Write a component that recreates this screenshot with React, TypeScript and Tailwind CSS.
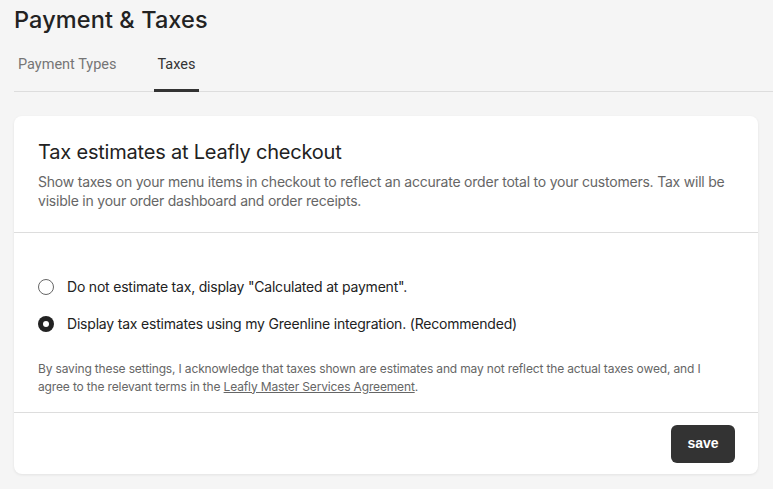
export default function App() {
  const body = { fontFamily: "Inter, 'Noto Sans', sans-serif" };
  const tab = { fontFamily: "Roboto, sans-serif" };

  return (
    <div className="min-h-screen w-full bg-[#f5f5f5] pl-[14px] pt-[5px]" style={body}>
      <h1 className="text-[23.5px] font-medium leading-[30px] tracking-[0.1px] text-[#222]">Payment &amp; Taxes</h1>

      <div className="mt-[14px] flex border-b border-[#ddd]">
        <div className="px-[4px] pb-[15px] pt-[5px] text-[14.5px] text-[#757575]" style={tab}>
          Payment Types
        </div>
        <div className="-mb-px ml-[33px] border-b-[3px] border-[#333] px-[4px] pb-[12px] pt-[5px] text-[14.5px] text-[#333]" style={tab}>
          Taxes
        </div>
      </div>

      <div className="mr-[15px] mt-[24px] rounded-[8px] bg-white shadow-[0_1px_3px_rgba(0,0,0,0.08)]">
        <div className="border-b border-[#ddd] px-[24px] pb-[22px] pt-[22px]">
          <h2 className="text-[20px] leading-[28px] tracking-[-0.2px] text-[#222]">Tax estimates at Leafly checkout</h2>
          <p className="mt-[6px] text-[14px] leading-[19px] tracking-[-0.22px] text-[#666]">
            Show taxes on your menu items in checkout to reflect an accurate order total to your customers. Tax will be
            visible in your order dashboard and order receipts.
          </p>
        </div>

        <div className="px-[24px] pb-[16px] pt-[44px]">
          <div className="flex flex-col gap-[17px]">
            <label className="flex items-center gap-[13px] text-[14px] leading-[20px] tracking-[-0.2px] text-[#222]">
              <span className="h-[16px] w-[16px] rounded-full border border-[#666] bg-white" />
              <span>Do not estimate tax, display "Calculated at payment".</span>
            </label>
            <label className="flex items-center gap-[13px] text-[14px] leading-[20px] tracking-[-0.2px] text-[#222]">
              <span className="flex h-[16px] w-[16px] items-center justify-center rounded-full bg-[#222]">
                <span className="h-[6px] w-[6px] rounded-full bg-white" />
              </span>
              <span>Display tax estimates using my Greenline integration. (Recommended)</span>
            </label>
          </div>

          <p className="mt-[26px] text-[12px] leading-[18px] tracking-[-0.15px] text-[#666]">
            By saving these settings, I acknowledge that taxes shown are estimates and may not reflect the actual taxes owed, and I
            agree to the relevant terms in the <a className="underline">Leafly Master Services Agreement</a>.
          </p>
        </div>

        <div className="flex justify-end border-t border-[#ddd] px-[23px] pb-[11px] pt-[12px]">
          <button
            className="h-[38px] w-[64px] rounded-[6px] bg-[#333] text-[14px] font-bold text-white"
            style={{ fontFamily: "'Liberation Sans', Arial, sans-serif" }}
          >
            save
          </button>
        </div>
      </div>
    </div>
  );
}
